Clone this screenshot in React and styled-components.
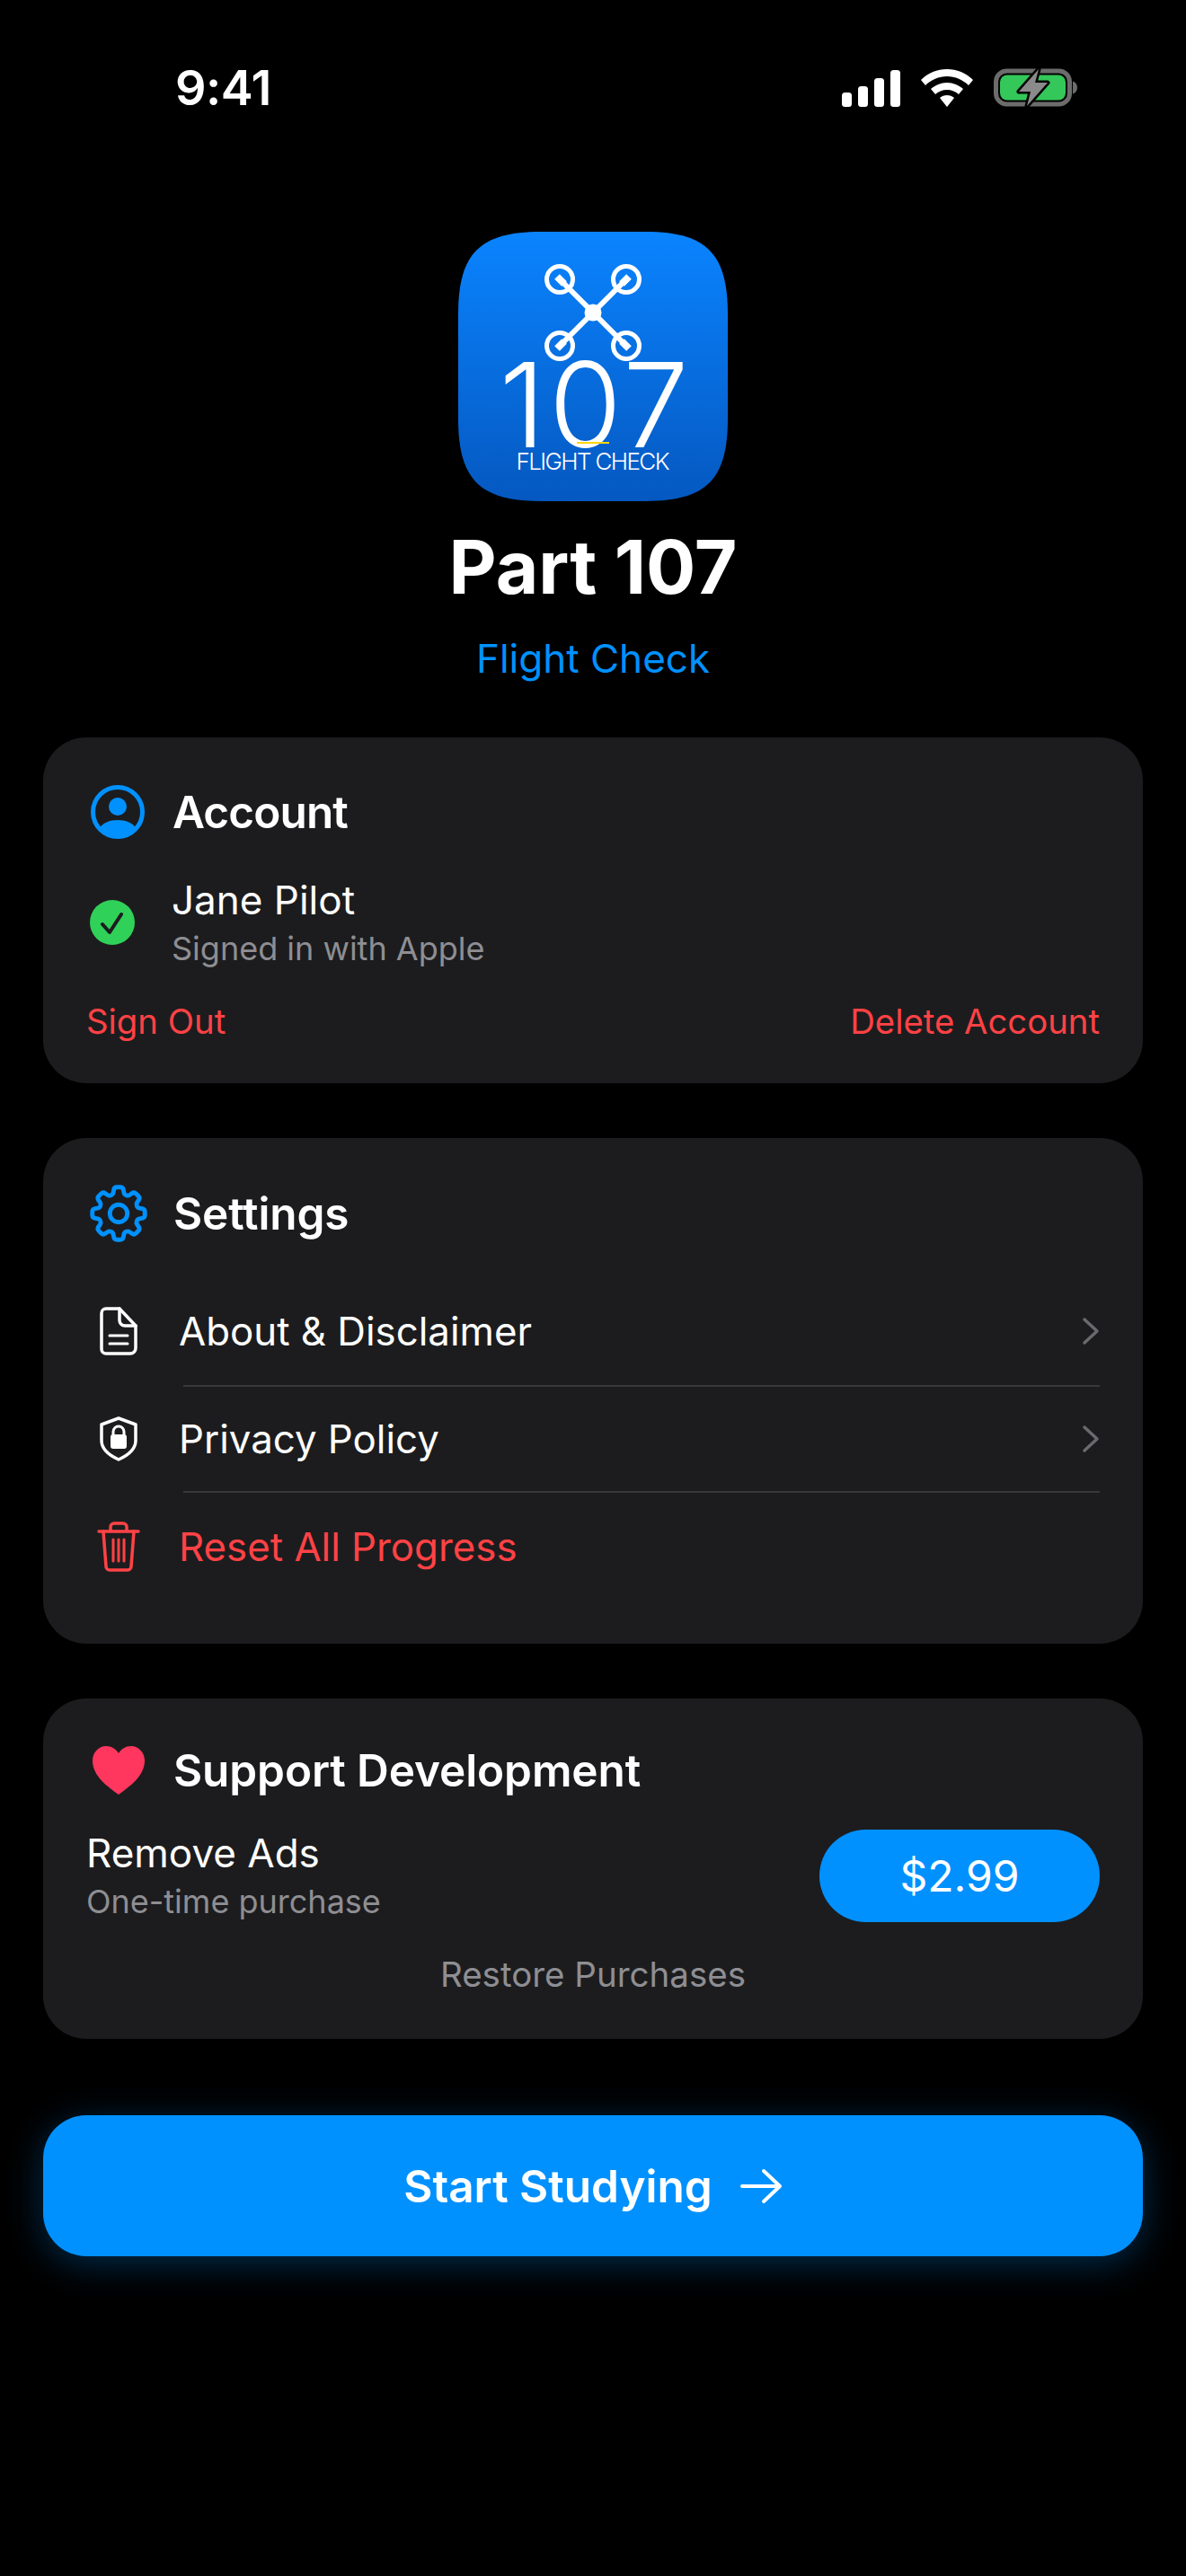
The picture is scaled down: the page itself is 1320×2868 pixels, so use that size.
import React from 'react'
import styled, { createGlobalStyle } from 'styled-components'
import { HiOutlineCog8Tooth } from 'react-icons/hi2'

const GlobalStyle = createGlobalStyle`
    html, body {
        margin: 0;
        padding: 0;
        background: #000;
    }
    body {
        font-family: Inter, "Noto Sans", sans-serif;
        color: #fff;
    }
`

const Screen = styled.div`
    width: 1320px;
    height: 2868px;
    background: #000;
    overflow: hidden;
`

const StatusBar = styled.div`
    height: 75px;
    padding: 60px 121px 0 195px;
    margin-bottom: 123px;
    display: flex;
    align-items: center;
    justify-content: space-between;
`

const Time = styled.span`
    font-size: 54px;
    font-weight: 600;
    letter-spacing: -0.5px;
`

const StatusIcons = styled.div`
    display: flex;
    align-items: center;
    gap: 23px;
`

const Hero = styled.header`
    display: flex;
    flex-direction: column;
    align-items: center;
`

const AppTitle = styled.h1`
    margin: 26px 0 0;
    font-size: 82px;
    line-height: 96px;
    font-weight: 700;
`

const AppSubtitle = styled.p`
    margin: 25px 0 0;
    font-size: 44px;
    line-height: 56px;
    font-weight: 400;
    color: #0091ff;
`

const Cards = styled.main`
    margin-top: 60px;
    padding: 0 48px;
    display: flex;
    flex-direction: column;
    gap: 61px;
`

const Card = styled.section`
    box-sizing: border-box;
    height: ${p => p.$height}px;
    padding: 0 48px;
    background: #1c1c1e;
    border-radius: 48px;
`

const CardHeader = styled.div`
    display: flex;
    align-items: center;
    height: 60px;
    padding-top: ${p => p.$top}px;
    padding-left: ${p => p.$left}px;
    gap: ${p => p.$gap}px;
`

const HeaderTitle = styled.h2`
    margin: 0;
    font-size: 49.5px;
    font-weight: 600;
    line-height: 60px;
    letter-spacing: ${p => p.$tight ? '-0.9px' : '-0.1px'};
`

const UserRow = styled.div`
    margin-top: 41px;
    padding-left: 4px;
    display: flex;
    align-items: center;
    gap: 41px;
`

const TextStack = styled.div`
    display: flex;
    flex-direction: column;
`

const PrimaryText = styled.span`
    font-size: 44px;
    line-height: 54px;
    font-weight: 400;
`

const SecondaryText = styled.span`
    font-size: 36px;
    line-height: 46px;
    color: #8e8e93;
    margin-top: 4px;
`

const AccountActions = styled.div`
    margin-top: 34px;
    display: flex;
    justify-content: space-between;
`

const DangerLink = styled.span`
    font-size: 38.3px;
    line-height: 48px;
    color: #ff4245;
`

const MenuList = styled.div`
    margin-top: 41px;
`

const MenuRow = styled.div`
    height: ${p => p.$height || 120}px;
    display: flex;
    align-items: center;
    color: ${p => p.$danger ? '#ff4245' : '#fff'};
`

const MenuIcon = styled.span`
    width: 103px;
    flex: none;
    padding-left: 15px;
    box-sizing: border-box;
    display: flex;
`

const MenuLabel = styled.span`
    flex: 1;
    font-size: 43.8px;
    font-weight: 400;
`

const Divider = styled.div`
    height: 2px;
    margin-left: 108px;
    background: #38383a;
`

const PurchaseRow = styled.div`
    margin-top: 35px;
    display: flex;
    align-items: center;
    justify-content: space-between;
`

const PriceButton = styled.button`
    width: 312px;
    height: 103px;
    border: none;
    border-radius: 52px;
    background: #0091ff;
    color: #fff;
    font-family: inherit;
    font-size: 48px;
    font-weight: 400;
`

const RestoreLink = styled.div`
    margin-top: 34px;
    text-align: center;
    font-size: 38.5px;
    line-height: 48px;
    color: #8e8e93;
`

const StartButton = styled.button`
    width: 1224px;
    height: 157px;
    margin: 85px 48px 0;
    border: none;
    border-radius: 48px;
    background: #0091ff;
    color: #fff;
    font-family: inherit;
    font-size: 49.5px;
    font-weight: 600;
    display: flex;
    align-items: center;
    justify-content: center;
    gap: 30px;
    box-shadow: 0 8px 40px rgba(0, 145, 255, 0.3);
`

const SignalIcon = () => (
    <svg width="65" height="42" viewBox="0 0 65 42" fill="#fff">
        <rect x="0" y="26" width="11" height="16" rx="3.5" />
        <rect x="18" y="19" width="11" height="23" rx="3.5" />
        <rect x="36" y="10" width="11" height="32" rx="3.5" />
        <rect x="54" y="1" width="11" height="41" rx="3.5" />
    </svg>
)

const WifiIcon = () => (
    <svg width="58" height="42" viewBox="0 0 58 42" fill="#fff">
        <path d="M29 0C18 0 8 4 0 12l5 6c6-6 15-10 24-10s18 4 24 10l5-6C50 4 40 0 29 0z" />
        <path d="M29 15c-7 0-13 3-18 7l5 6c3-3 8-5 13-5s10 2 13 5l5-6c-5-4-11-7-18-7z" />
        <path d="M29 29c-3 0-6 1-8 3l8 10 8-10c-2-2-5-3-8-3z" />
    </svg>
)

const BatteryIcon = () => (
    <svg width="93" height="43" viewBox="0 0 93 43">
        <rect x="2.5" y="3" width="82" height="37" rx="12" fill="none" stroke="#6c6c6c" strokeWidth="5" />
        <rect x="7" y="7.5" width="73" height="28" rx="8" fill="#34c759" />
        <path d="M88 14.5c3 1 5 3.500 5 7s-2 6-5 7z" fill="#6c6c6c" />
        <path d="M50 1L28 26h13l-4 16 23-26H46z" fill="#8a8a8a" stroke="#000" strokeWidth="5" strokeLinejoin="round" paintOrder="stroke" />
    </svg>
)

const AppLogo = () => (
    <svg width="300" height="300" viewBox="0 0 300 300">
        <defs>
            <linearGradient id="logoFill" x1="0" y1="0" x2="0" y2="1">
                <stop offset="0" stopColor="#0a84ff" />
                <stop offset="1" stopColor="#0558c0" />
            </linearGradient>
        </defs>
        <path d="M0 92C0 24 24 0 92 0h116c68 0 92 24 92 92v116c0 68-24 92-92 92H92C24 300 0 276 0 208z" fill="url(#logoFill)" />
        <g fill="none" stroke="#fff" strokeWidth="5">
            <circle cx="113" cy="53" r="14.500" />
            <circle cx="187" cy="53" r="14.500" />
            <circle cx="113" cy="127" r="14.500" />
            <circle cx="187" cy="127" r="14.500" />
            <path d="M113 53L187 127M187 53L113 127" strokeWidth="6" />
            <path d="M110 50L118 58M190 50L182 58M110 130L118 122M190 130L182 122" strokeWidth="8" />
        </g>
        <circle cx="150" cy="90" r="9.500" fill="#fff" />
        <text x="153" y="240" textAnchor="middle" fill="#fff" fontFamily="Inter" fontWeight="300" fontSize="131" letterSpacing="4">107</text>
        <rect x="132" y="234" width="36" height="2" fill="#ffd60a" />
        <text x="150" y="265" textAnchor="middle" fill="#fff" fontFamily="Inter" fontWeight="300" fontSize="26" textLength="171" lengthAdjust="spacing">FLIGHT CHECK</text>
    </svg>
)

const UserIcon = () => (
    <svg width="60" height="60" viewBox="0 0 60 60">
        <circle cx="30" cy="30" r="27.500" fill="none" stroke="#0091ff" strokeWidth="5" />
        <circle cx="30" cy="24" r="10" fill="#0091ff" />
        <path d="M9 49c4-7 12-10 21-10s17 3 21 10c-5 6-13 10-21 10S14 55 9 49z" fill="#0091ff" />
    </svg>
)

const VerifiedIcon = () => (
    <svg width="50" height="50" viewBox="0 0 50 50">
        <circle cx="25" cy="25" r="25" fill="#30d158" />
        <path d="M14 27l8 9 13-20" fill="none" stroke="#1c1c1e" strokeWidth="4" strokeLinecap="round" strokeLinejoin="round" />
    </svg>
)

const DocIcon = () => (
    <svg width="42" height="54" viewBox="0 0 42 54" fill="none" stroke="#fff" strokeWidth="3.500" strokeLinejoin="round" strokeLinecap="round">
        <path d="M7 2h15l18 19v25a6 6 0 0 1-6 6H7a5 5 0 0 1-5-5V7a5 5 0 0 1 5-5z" />
        <path d="M22 2v13a6 6 0 0 0 6 6h12" />
        <path d="M11 32h20M11 41h20" strokeWidth="3" />
    </svg>
)

const ShieldIcon = () => (
    <svg width="42" height="50" viewBox="0 0 42 50">
        <path d="M21 2L40 9v18c0 9-8 16-19 21C10 43 2 36 2 27V9z" fill="none" stroke="#fff" strokeWidth="3.500" strokeLinejoin="round" />
        <rect x="12" y="20" width="18" height="16" rx="3" fill="#fff" />
        <path d="M15 21v-4a6 6 0 0 1 12 0v4" fill="none" stroke="#fff" strokeWidth="3" />
    </svg>
)

const TrashGlyph = styled.svg`
    margin-left: -3px;
`

const TrashIcon = () => (
    <TrashGlyph width="48" height="56" viewBox="0 0 48 56" fill="none" stroke="#ff4245" strokeWidth="3.500" strokeLinecap="round" strokeLinejoin="round">
        <path d="M2 11h44" />
        <path d="M15 10V6a4 4 0 0 1 4-4h10a4 4 0 0 1 4 4v4" />
        <path d="M7 11l3 39a4 4 0 0 0 4 4h20a4 4 0 0 0 4-4l3-39" />
        <path d="M18 20v24M24 20v24M30 20v24" strokeWidth="3" />
    </TrashGlyph>
)

const Chevron = () => (
    <svg width="20" height="32" viewBox="0 0 20 32" fill="none" stroke="#6a6a6e" strokeWidth="3.500" strokeLinecap="round" strokeLinejoin="round">
        <path d="M3 3l14 13L3 29" />
    </svg>
)

const HeartIcon = () => (
    <svg width="58" height="54" viewBox="0 0 58 54">
        <path d="M29 54C12 42 0 31 0 16 0 7 7 0 15 0c6 0 11 3 14 8 3-5 8-8 14-8 8 0 15 7 15 16 0 15-12 26-29 38z" fill="#ff375f" />
    </svg>
)

const ArrowIcon = () => (
    <svg width="48" height="40" viewBox="0 0 48 40" fill="none" stroke="#fff" strokeWidth="4" strokeLinecap="round" strokeLinejoin="round">
        <path d="M3 20h42M27 3l18 17-18 17" />
    </svg>
)

const GearIcon = styled(HiOutlineCog8Tooth)`
    flex: none;
    margin-left: -3px;
    color: #0091ff;
`

const App = () => (
    <Screen>
        <GlobalStyle />
        <StatusBar>
            <Time>9:41</Time>
            <StatusIcons>
                <SignalIcon />
                <WifiIcon />
                <BatteryIcon />
            </StatusIcons>
        </StatusBar>
        <Hero>
            <AppLogo />
            <AppTitle>Part 107</AppTitle>
            <AppSubtitle>Flight Check</AppSubtitle>
        </Hero>
        <Cards>
            <Card $height={385}>
                <CardHeader $top={53} $left={5} $gap={31}>
                    <UserIcon />
                    <HeaderTitle $tight>Account</HeaderTitle>
                </CardHeader>
                <UserRow>
                    <VerifiedIcon />
                    <TextStack>
                        <PrimaryText>Jane Pilot</PrimaryText>
                        <SecondaryText>Signed in with Apple</SecondaryText>
                    </TextStack>
                </UserRow>
                <AccountActions>
                    <DangerLink>Sign Out</DangerLink>
                    <DangerLink>Delete Account</DangerLink>
                </AccountActions>
            </Card>
            <Card $height={563}>
                <CardHeader $top={54} $left={0} $gap={22}>
                    <GearIcon size={78} />
                    <HeaderTitle>Settings</HeaderTitle>
                </CardHeader>
                <MenuList>
                    <MenuRow>
                        <MenuIcon><DocIcon /></MenuIcon>
                        <MenuLabel>About &amp; Disclaimer</MenuLabel>
                        <Chevron />
                    </MenuRow>
                    <Divider />
                    <MenuRow $height={116}>
                        <MenuIcon><ShieldIcon /></MenuIcon>
                        <MenuLabel>Privacy Policy</MenuLabel>
                        <Chevron />
                    </MenuRow>
                    <Divider />
                    <MenuRow $danger>
                        <MenuIcon><TrashIcon /></MenuIcon>
                        <MenuLabel>Reset All Progress</MenuLabel>
                    </MenuRow>
                </MenuList>
            </Card>
            <Card $height={379}>
                <CardHeader $top={50} $left={7} $gap={32}>
                    <HeartIcon />
                    <HeaderTitle>Support Development</HeaderTitle>
                </CardHeader>
                <PurchaseRow>
                    <TextStack>
                        <PrimaryText>Remove Ads</PrimaryText>
                        <SecondaryText>One-time purchase</SecondaryText>
                    </TextStack>
                    <PriceButton>$2.99</PriceButton>
                </PurchaseRow>
                <RestoreLink>Restore Purchases</RestoreLink>
            </Card>
        </Cards>
        <StartButton>
            Start Studying
            <ArrowIcon />
        </StartButton>
    </Screen>
)

export default App
